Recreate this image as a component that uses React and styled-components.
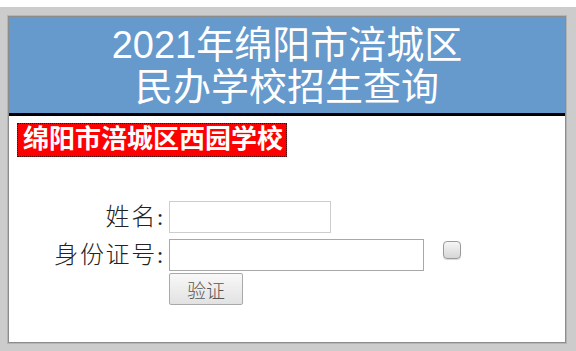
import React, { useState } from 'react';
import styled, { createGlobalStyle } from 'styled-components';

const GlobalStyle = createGlobalStyle`
  html, body {
    margin: 0;
    padding: 0;
    background: #fff;
  }
`;

// 外层灰色背景
const Page = styled.div`
  margin-top: 7px;
  padding: 9px 10px 8px 8px;
  background-color: #cccccc;
`;

// 主面板
const Panel = styled.div`
  height: 327px;
  box-sizing: border-box;
  background-color: #fff;
  border: 1px solid #8c8c8c;
  box-shadow: 0 0 0 1px #b4b4b4;
  display: flex;
  flex-direction: column;
`;

// 标题栏
const Header = styled.div`
  height: 99px;
  flex-shrink: 0;
  padding-top: 7px;
  box-sizing: border-box;
  background-color: #6699cc;
  border-bottom: 3px solid #000;
  color: #fff;
  text-align: center;
  font-family: 'Liberation Sans', 'Noto Sans CJK SC', sans-serif;
  font-size: 38px;
  line-height: 42px;
  h1 {
    margin: 0;
    font-size: inherit;
    font-weight: 400;
  }
`;

const Body = styled.div`
  padding: 7px 8px 0 8px;
`;

// 学校名称
const School = styled.div`
  display: inline-block;
  height: 34px;
  box-sizing: border-box;
  padding: 0 3px 0 5px;
  background-color: #ff0000;
  border: 1px dotted #5a0000;
  color: #fff;
  font-family: 'Liberation Serif', 'Noto Sans CJK SC', serif;
  font-weight: 700;
  font-size: 26px;
  line-height: 31px;
  white-space: nowrap;
`;

const Form = styled.form`
  margin-top: 44px;
  display: flex;
  flex-direction: column;
`;

const Row = styled.div`
  display: grid;
  grid-template-columns: 148px auto auto;
  column-gap: 4px;
  align-items: center;
  justify-content: start;
  height: 32px;
  margin-top: ${(p) => p.$gap || 0}px;
`;

const Label = styled.label`
  text-align: right;
  color: #222;
  font-family: 'Liberation Serif', 'Noto Sans CJK SC', serif;
  font-weight: 300;
  font-size: 24px;
  line-height: 32px;
  letter-spacing: 1.6px;
  white-space: nowrap;
`;

const Input = styled.input`
  width: ${(p) => p.$w}px;
  height: 32px;
  box-sizing: border-box;
  margin: 0;
  padding: 0 4px;
  border: 1px solid ${(p) => p.$border};
  background: #fff;
  font-size: 16px;
  outline: none;
`;

const Check = styled.input`
  appearance: none;
  width: 18px;
  height: 18px;
  margin: 2px 0 0 15px;
  align-self: start;
  border: 1px solid #9a9a9a;
  border-radius: 4px;
  background: linear-gradient(#f6f6f6, #d6d6d6);
  box-shadow: 0 1px 1px rgba(0, 0, 0, 0.15);
`;

const Button = styled.button`
  grid-column: 2;
  width: 74px;
  height: 32px;
  margin: 0;
  padding: 0;
  border: 1px solid #a9a9a9;
  border-radius: 2px;
  background: linear-gradient(#f8f8f8, #e2e2e2);
  color: #555;
  font-family: 'Liberation Serif', 'Noto Sans CJK SC', serif;
  font-weight: 300;
  font-size: 19px;
  cursor: pointer;
`;

export default function App() {
  const [name, setName] = useState('');
  const [idNo, setIdNo] = useState('');

  return (
    <>
      <GlobalStyle />
      <Page>
        <Panel>
          <Header>
            <h1>2021年绵阳市涪城区</h1>
            <h1>民办学校招生查询</h1>
          </Header>
          <Body>
            <School>绵阳市涪城区西园学校</School>
            <Form onSubmit={(e) => e.preventDefault()}>
              <Row>
                <Label>姓名:</Label>
                <Input
                  $w={162}
                  $border="#cdcdcd"
                  value={name}
                  onChange={(e) => setName(e.target.value)}
                />
              </Row>
              <Row $gap={6}>
                <Label>身份证号:</Label>
                <Input
                  $w={255}
                  $border="#a8a8a8"
                  value={idNo}
                  onChange={(e) => setIdNo(e.target.value)}
                />
                <Check type="checkbox" />
              </Row>
              <Row $gap={2}>
                <Button type="submit">验证</Button>
              </Row>
            </Form>
          </Body>
        </Panel>
      </Page>
    </>
  );
}
